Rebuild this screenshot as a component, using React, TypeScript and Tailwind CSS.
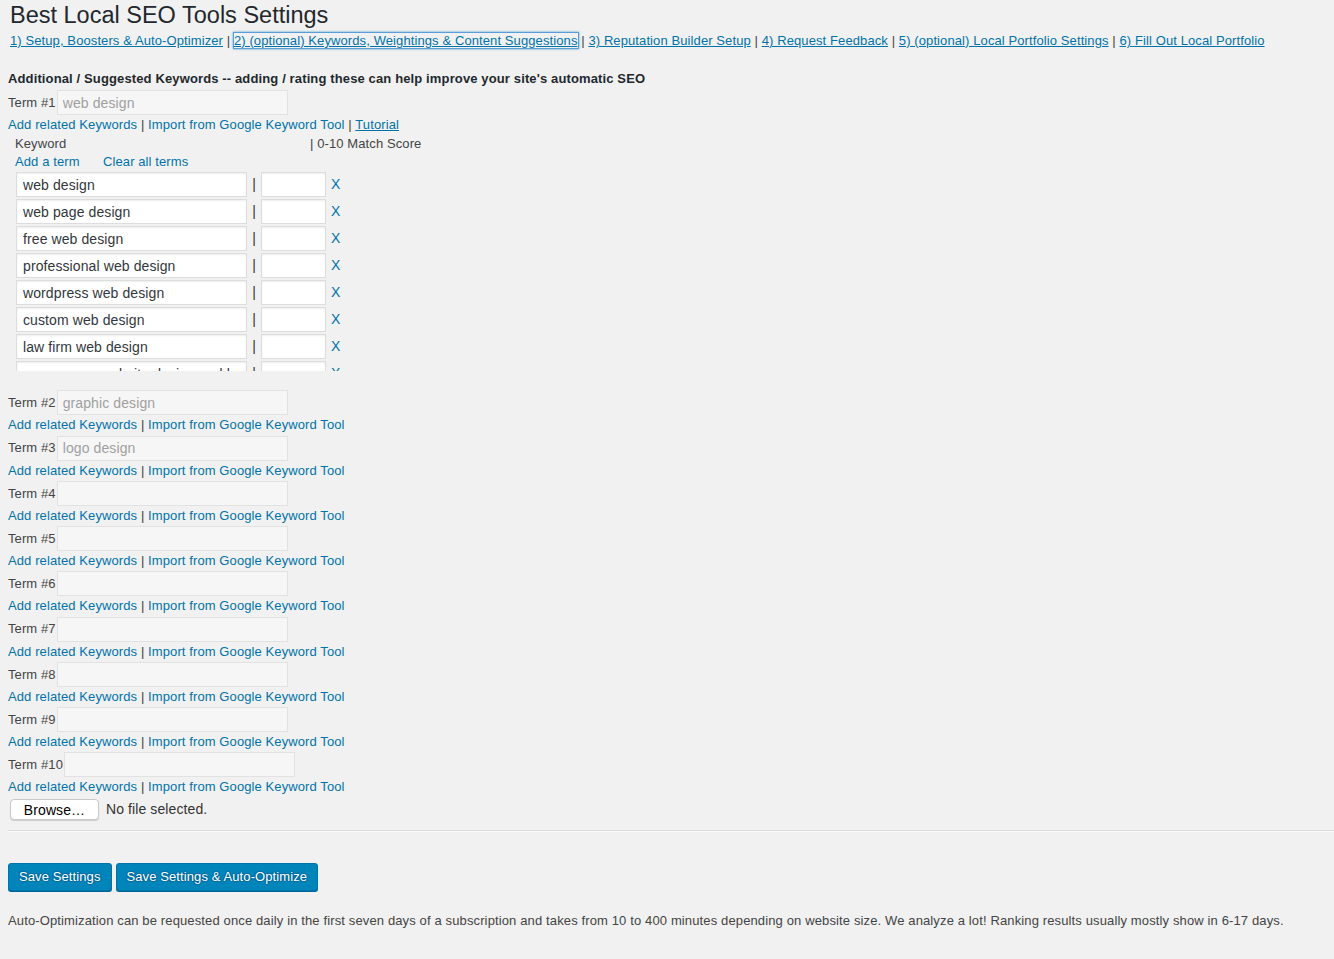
import React from 'react';

const navLinks = [
  '1) Setup, Boosters & Auto-Optimizer',
  '2) (optional) Keywords, Weightings & Content Suggestions',
  '3) Reputation Builder Setup',
  '4) Request Feedback',
  '5) (optional) Local Portfolio Settings',
  '6) Fill Out Local Portfolio',
];

const keywords = [
  'web design',
  'web page design',
  'free web design',
  'professional web design',
  'wordpress web design',
  'custom web design',
  'law firm web design',
  'ecommerce website design and build',
];

const terms = ['graphic design', 'logo design', '', '', '', '', '', '', ''];

const TermInput: React.FC<{ n: number; value: string }> = ({ n, value }) => (
  <div className="flex items-center h-[25px]">
    <span className="text-[#444]">Term #{n}</span>
    <input
      readOnly
      value=""
      placeholder={value}
      className="ml-px h-[25px] w-[231px] border border-[#e2e2e2] bg-[#f6f6f6] px-[5px] text-[14px] text-[#999] placeholder:text-[#a0a0a0] outline-none"
    />
  </div>
);

const RelatedLinks: React.FC<{ tutorial?: boolean }> = ({ tutorial }) => (
  <div className="h-[20.25px] leading-[20px] text-[#0073aa]">
    <span>Add related Keywords</span>
    <span className="text-[#444]"> | </span>
    <span>Import from Google Keyword Tool</span>
    {tutorial && (
      <>
        <span className="text-[#444]"> | </span>
        <span className="underline">Tutorial</span>
      </>
    )}
  </div>
);

export default function App() {
  return (
    <div className="min-h-[959px] bg-[#f1f1f1] text-[13px] tracking-[0.1px] text-[#444] font-['Liberation_Sans',Arial,sans-serif]">
      <h1 className="pt-[1px] pl-[10px] text-[23.5px] leading-[29px] tracking-normal text-[#23282d]">
        Best Local SEO Tools Settings
      </h1>

      <div className="mt-[2px] pl-[10px] h-[18px] leading-[18px] whitespace-nowrap">
        {navLinks.map((l, i) => (
          <React.Fragment key={l}>
            {i > 0 && <span className="text-[#444]"> | </span>}
            <span
              className={
                'text-[#0073aa] underline ' +
                (i === 1 ? 'shadow-[0_0_0_1px_#5b9dd9,0_0_2px_1px_rgba(30,140,190,0.8)]' : '')
              }
            >
              {l}
            </span>
          </React.Fragment>
        ))}
      </div>

      <div className="pl-[8px]">
        <div className="mt-[20px] font-bold leading-[18px] tracking-[0.13px] text-[#23282d]">
          Additional / Suggested Keywords -- adding / rating these can help improve your site's automatic SEO
        </div>

        <div className="mt-[2px]">
          <TermInput n={1} value="web design" />
          <RelatedLinks tutorial />
        </div>

        <div className="flex h-[18px] leading-[18px] pl-[7px]">
          <span className="w-[295px]">Keyword</span>
          <span>| 0-10 Match Score</span>
        </div>
        <div className="flex h-[18px] leading-[18px] pl-[7px] text-[#0073aa]">
          <span className="w-[88px]">Add a term</span>
          <span>Clear all terms</span>
        </div>

        <div className="h-[200px] overflow-hidden pl-[8px]">
          {keywords.map((k) => (
            <div key={k} className="flex items-center py-px">
              <input
                readOnly
                value={k}
                className="h-[25px] w-[231px] border border-[#ddd] bg-white px-[6px] text-[14px] text-[#32373c] shadow-[inset_0_1px_2px_rgba(0,0,0,0.07)] outline-none"
              />
              <span className="w-[14px] text-center text-[14px] text-[#32373c]">|</span>
              <input
                readOnly
                value=""
                className="h-[25px] w-[65px] border border-[#ddd] bg-white shadow-[inset_0_1px_2px_rgba(0,0,0,0.07)] outline-none"
              />
              <span className="ml-[5px] text-[14px] text-[#0073aa]">X</span>
            </div>
          ))}
        </div>

        <div className="mt-[19px]">
          {terms.map((t, i) => (
            <div key={i}>
              <TermInput n={i + 2} value={t} />
              <RelatedLinks />
            </div>
          ))}
        </div>

        <div className="mt-[1px] flex items-center h-[22px]">
          <button className="ml-[2px] h-[21px] w-[89px] rounded-[4px] border border-[#c8c8c8] bg-white text-[14px] text-black shadow-[0_1px_1px_rgba(0,0,0,0.15)]">
            Browse…
          </button>
          <span className="ml-[7px] text-[14px] text-[#333]">No file selected.</span>
        </div>
      </div>

      <div className="ml-[8px] mt-[9px] border-t border-t-[#ddd] border-b border-b-[#fafafa]" />

      <div className="pl-[8px] mt-[31px] flex gap-[4px]">
        <button className="h-[28px] px-[10px] rounded-[3px] border border-[#0073aa] bg-[#0085ba] text-[13px] text-white shadow-[0_1px_0_#006799] [text-shadow:0_-1px_1px_#006799,1px_0_1px_#006799,0_1px_1px_#006799,-1px_0_1px_#006799]">
          Save Settings
        </button>
        <button className="h-[28px] px-[10px] rounded-[3px] border border-[#0073aa] bg-[#0085ba] text-[13px] text-white shadow-[0_1px_0_#006799] [text-shadow:0_-1px_1px_#006799,1px_0_1px_#006799,0_1px_1px_#006799,-1px_0_1px_#006799]">
          Save Settings &amp; Auto-Optimize
        </button>
      </div>

      <p className="pl-[8px] mt-[21px] leading-[18px] tracking-[0.13px] text-[#444]">
        Auto-Optimization can be requested once daily in the first seven days of a subscription and takes from 10 to 400 minutes depending on website size. We analyze a lot! Ranking results usually mostly show in 6-17 days.
      </p>
    </div>
  );
}
